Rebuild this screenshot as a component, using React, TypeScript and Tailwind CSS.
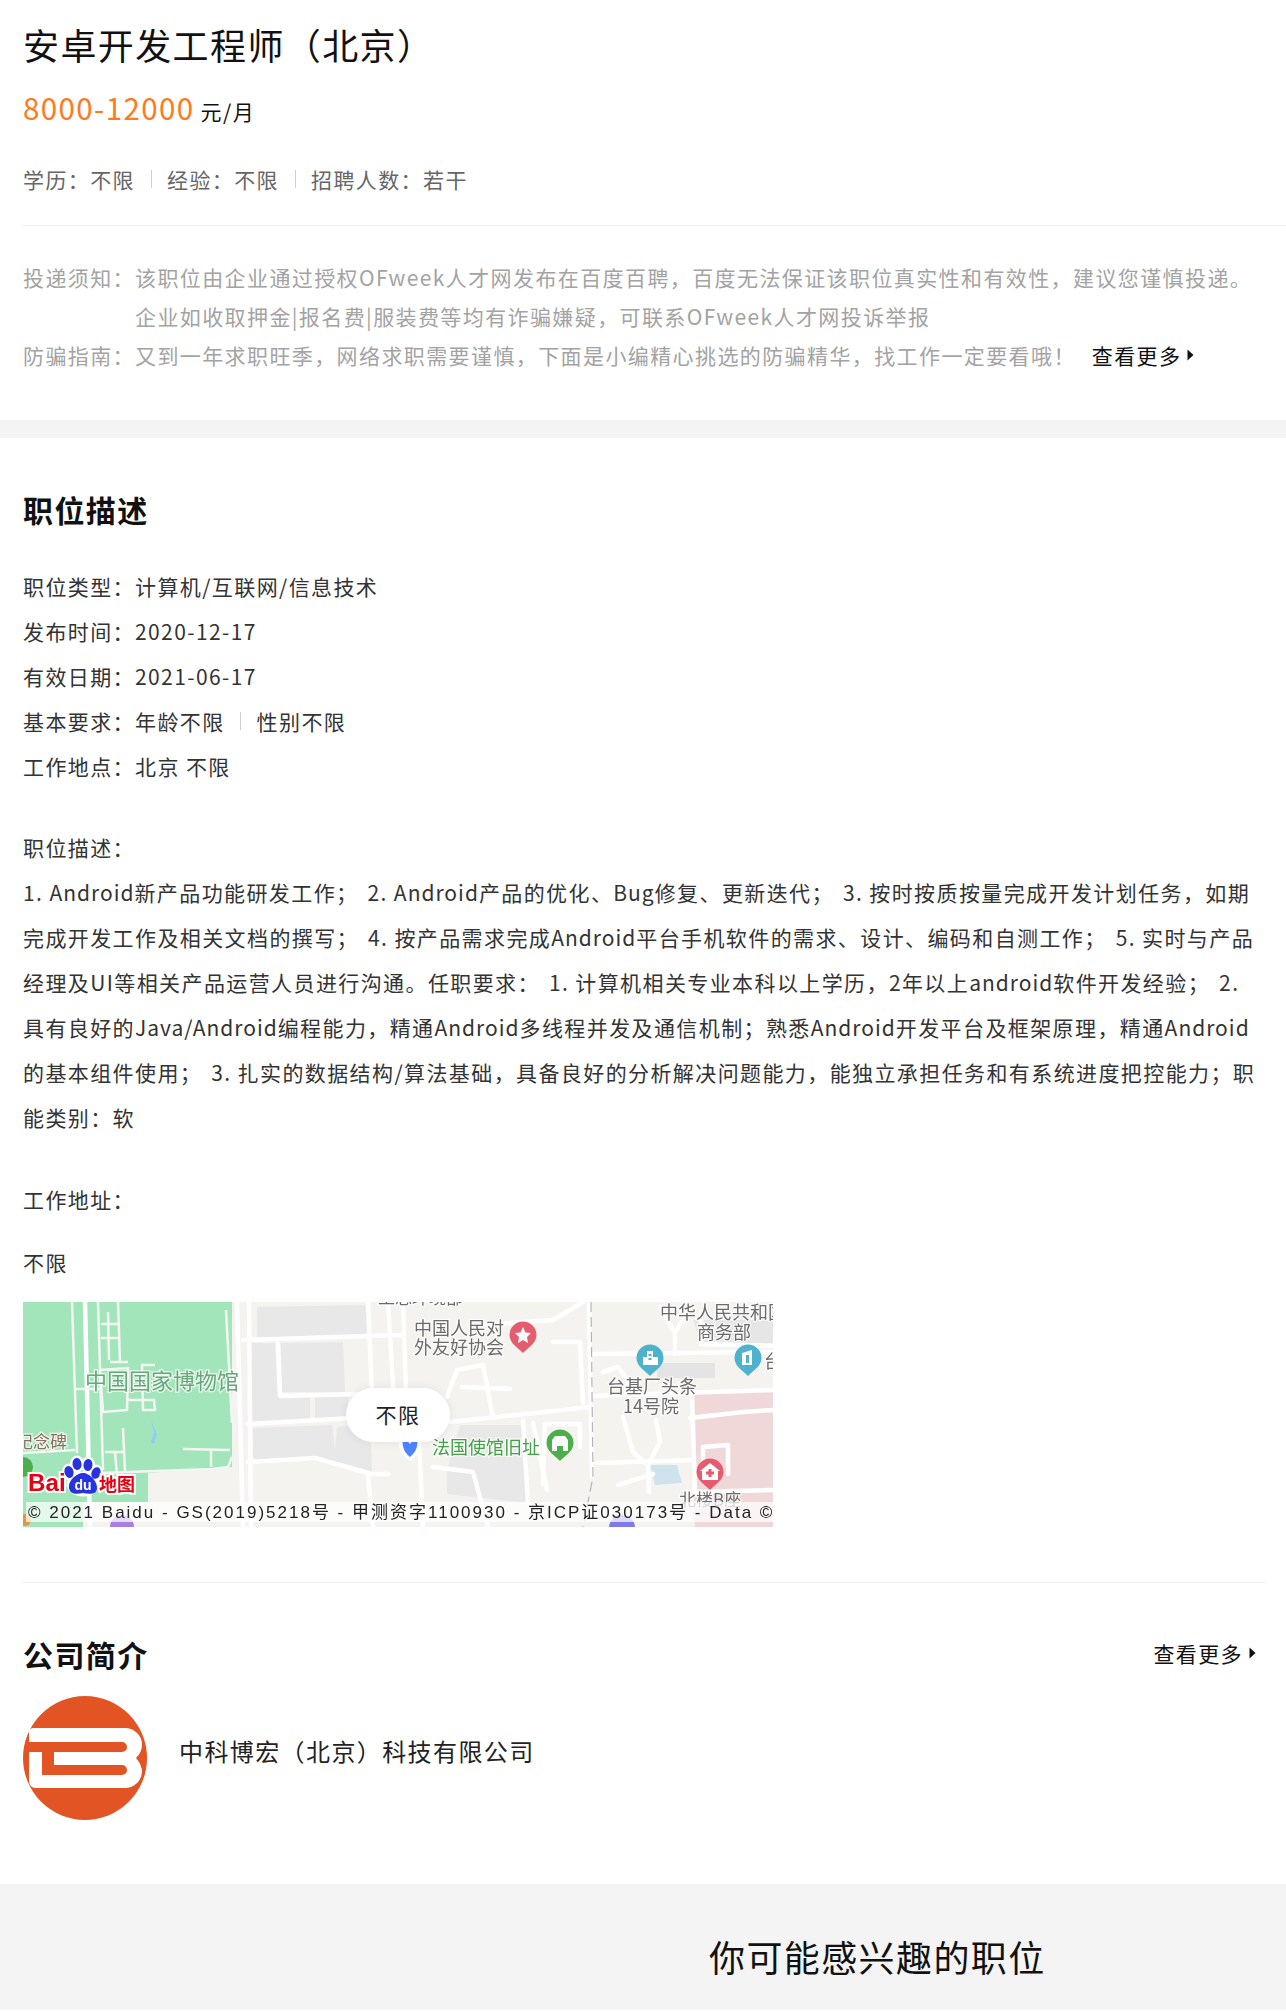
import React from "react";

const Sep = () => <span className="inline-block w-px h-[18px] bg-[#cfcfcf] mx-[15.5px] align-[0px]" />;

const Arrow = () => (
  <svg width="7" height="12" viewBox="0 0 7 12" className="ml-[6px] mb-[2px]">
    <path d="M0.5 0.5 L6.5 6 L0.5 11.5 Z" fill="#111" />
  </svg>
);

const L = ({ children }: { children: React.ReactNode }) => <span className="tracking-[1px]">{children}</span>;
const Gap = () => <span className="inline-block w-[9px]" />;

const Pin = ({ x, y, c, children }: { x: number; y: number; c: string; children?: React.ReactNode }) => (
  <g transform={`translate(${x} ${y})`}>
    <path d="M-13.5 0 A13.5 13.5 0 1 1 13.5 0 C13.5 8 6 12 0 18 C-6 12 -13.5 8 -13.5 0 Z" fill={c} />
    {children}
  </g>
);

const Label = ({ x, y, c = "#6b6b6b", s = 18, children }: { x: number; y: number; c?: string; s?: number; children: string }) => (
  <text x={x} y={y} fill={c} fontSize={s} letterSpacing={0} stroke="#fff" strokeWidth={2.5} strokeOpacity={0.75} paintOrder="stroke" fontFamily="'Noto Sans CJK SC',sans-serif">
    {children}
  </text>
);

const roadsThick = [
  "M62 0 L67 225", "M214 0 L220 225", "M226 0 L228 225", "M566 0 L569 175",
  "M220 38 L345 34 L380 33", "M225 122 L330 116", "M427 120 L567 105",
  "M570 52 L750 50", "M569 94 L750 88", "M574 161 L670 158", "M669 90 L672 190",
  "M500 118 L505 201", "M510 121 L524 188", "M424 95 L434 68 L460 63 L470 116",
  "M439 85 L487 87", "M530 40 L557 40 L560 101", "M460 22 L487 21 L530 18 L560 0",
  "M255 41 L257 94 L340 92", "M345 0 L350 116", "M365 0 L372 116", "M395 116 L400 225",
  "M380 0 L383 90", "M225 160 L292 156 L349 172 L365 172",
  "M345 175 L350 225", "M410 165 L450 170 L465 225", "M600 115 L610 150 L625 163 L637 140 L633 118",
  "M625 163 L626 190", "M595 183 L630 172", "M520 182 L522 122 L557 122 L557 145",
  "M667 116 L720 110 L750 108", "M680 165 L680 145 L705 143 L705 172", "M637 5 L652 31 L667 5",
  "M652 31 L652 52", "M678 10 L678 42 L750 44", "M574 205 L600 205", "M670 190 L750 188",
  "M580 70 L595 65 L605 78 L605 94",
];

const roadsThin = [
  "M49 0 L54 151", "M0 151 L52 148", "M52 87 L77 87", "M75 0 L80 168", "M95 0 L97 60",
  "M78 22 L96 22", "M78 36 L96 36", "M85 10 L86 58", "M77 68 L105 66 L104 108 L80 110 L77 68",
  "M87 60 L105 60", "M105 98 L131 98 L132 108 L120 108 L119 63 L132 63",
  "M100 126 L102 170", "M82 150 L102 150", "M92 150 L94 172", "M160 147 L207 148",
  "M188 149 L188 165", "M77 171 L190 167 L205 165 L209 155", "M203 8 L209 121",
];

const MapView = () => (
  <div className="relative w-[750px] h-[225px] mt-[17px] ml-[23px] overflow-hidden">
    <svg width="750" height="225" viewBox="0 0 750 225" className="block blur-[0.3px]">
      <rect width="750" height="225" fill="#f4f3f0" />
      <path d="M0 0 H209 V125 L209 165 L125 171 V200 H60 V225 H0 Z" fill="#a3e5bb" />
      <path d="M234 5 L342 3 L347 33 L234 36 Z" fill="#e8e8e8" />
      <path d="M225 41 L252 41 L255 95 L287 95 L287 120 L225 121 Z" fill="#e8e8e8" />
      <path d="M257 41 L320 40 L322 90 L259 90 Z" fill="#e8e8e8" />
      <path d="M292 95 L325 93 L325 118 L292 118 Z" fill="#e8e8e8" />
      <path d="M230 126 L309 123 L312 148 L314 125 L347 121 L349 171 L292 156 L237 161 L230 155 Z" fill="#e8e8e8" />
      <path d="M437 123 L499 123 L504 201 L424 192 L424 168 Z" fill="#e8e8e8" />
      <path d="M670 18 H750 V41 H678 Z" fill="#e6e6e6" />
      <path d="M634 61 L692 61 L692 76 L634 76 Z" fill="#e4e4e4" />
      <path d="M667 90 H750 V225 H672 Z" fill="#f0d8d8" />
      <path d="M627 163 L654 163 L659 181 L632 183 Z" fill="#cfe3ee" />
      <path d="M128 118 L131 130 L128 140 L131 142 L134 132 Z" fill="#8ecdf5" />
      {roadsThick.map((d, i) => (
        <path key={i} d={d} fill="none" stroke="#fff" strokeWidth={4.5} strokeLinejoin="round" strokeLinecap="round" />
      ))}
      {roadsThin.map((d, i) => (
        <path key={i} d={d} fill="none" stroke="#f3f6f3" strokeWidth={2.5} strokeLinejoin="round" />
      ))}
      <path d="M568 0 L570 175 L560 225" fill="none" stroke="#b5b5b5" strokeWidth={1.2} strokeDasharray="10 5" />

      <Label x={62} y={87} c="#69a67d" s={22}>中国国家博物馆</Label>
      <Label x={-7} y={146} c="#8d6e5d" s={17}>纪念碑</Label>
      <Label x={355} y={2} s={17}>工总环境部</Label>
      <Label x={391} y={32.5}>中国人民对</Label>
      <Label x={391} y={51.5}>外友好协会</Label>
      <Label x={637} y={17}>中华人民共和国</Label>
      <Label x={674} y={36.5}>商务部</Label>
      <Label x={584} y={90.5}>台基厂头条</Label>
      <Label x={600} y={110.5}>14号院</Label>
      <Label x={409} y={151.5} c="#43a047">法国使馆旧址</Label>
      <Label x={741} y={66}>台</Label>
      <Label x={656} y={204} s={17}>北楼B座</Label>

      <Pin x={500} y={33} c="#e55c6e">
        <path d="M0 -8 L2.5 -2.5 L8 -2 L4 2 L5 8 L0 5 L-5 8 L-4 2 L-8 -2 L-2.5 -2.5 Z" fill="#fff" />
      </Pin>
      <Pin x={627} y={56} c="#4eb2cc">
        <path d="M-7 7 V-1 H-3 V-7 H3 V-1 H8 V7 Z" fill="#fff" />
        <path d="M-1.5 -4 H1.5 V-2 H-1.5 Z M-1.5 0 H1.5 V2 H-1.5 Z" fill="#4eb2cc" />
      </Pin>
      <Pin x={725} y={56} c="#4eb2cc">
        <path d="M-6 7 V-5 L4 -8 V7 Z" fill="#fff" />
        <path d="M-2 -3 H1 V5 H-2 Z" fill="#4eb2cc" />
      </Pin>
      <Pin x={537} y={141} c="#4cae4c">
        <path d="M-8 8 V-3 L-5 -7 H5 L8 -3 V8 H3 V3 H-3 V8 Z" fill="#fff" />
      </Pin>
      <Pin x={687} y={170} c="#e55c6e">
        <path d="M0 -9 L10 -1 H8 V8 H-8 V-1 H-10 Z" fill="#fff" />
        <path d="M-1.5 -3 H1.5 V-0.5 H4 V2.5 H1.5 V5 H-1.5 V2.5 H-4 V-0.5 H-1.5 Z" fill="#e55c6e" />
      </Pin>
      <circle cx={99} cy={225} r={12} fill="#a97fe0" />
      <circle cx={599} cy={226} r={13} fill="#7d7bea" />
      <circle cx={0} cy={165} r={10} fill="#4cae4c" />
      <circle cx={2} cy={218} r={6} fill="#d89a45" />

      <path d="M376 130 H398 V142 C398 150 392 155 387 159 C382 155 376 150 376 142 Z" fill="#fff" />
      <path d="M380 134 L387 142 L394 134 C396 148 390 152 387 155 C384 152 378 148 380 134 Z" fill="#4f84ff" />

      <g fontFamily="'Liberation Sans',sans-serif" fontWeight={700}>
        <g stroke="#fff" strokeWidth={5} strokeLinejoin="round">
          <ellipse cx={54} cy={162} rx={4.5} ry={6} />
          <ellipse cx={65} cy={163} rx={4.5} ry={6} />
          <ellipse cx={46} cy={170} rx={4.5} ry={6} />
          <ellipse cx={73} cy={171} rx={4.5} ry={6} />
          <ellipse cx={60} cy={182} rx={14} ry={10} />
        </g>
        <text x={5} y={189} fontSize={24} letterSpacing={0.2} fill="#e60012" stroke="#fff" strokeWidth={4} paintOrder="stroke">Bai</text>
        <ellipse cx={54} cy={162} rx={4.5} ry={6} fill="#2932e1" transform="rotate(-8 54 162)" />
        <ellipse cx={65} cy={163} rx={4.5} ry={6} fill="#2932e1" transform="rotate(8 65 163)" />
        <ellipse cx={46} cy={170} rx={4.5} ry={6} fill="#2932e1" transform="rotate(-15 46 170)" />
        <ellipse cx={73} cy={171} rx={4.5} ry={6} fill="#2932e1" transform="rotate(20 73 171)" />
        <path d="M46 186 C45 178 54 171 60 171 C66 171 75 179 74 187 C73 193 66 192 60 191 C54 192 47 193 46 186 Z" fill="#2932e1" />
        <text x={60} y={188} fontSize={14} letterSpacing={0} fill="#fff" textAnchor="middle">du</text>
        <text x={76} y={189} fontSize={18} letterSpacing={0} fontWeight={700} fill="#e60012" stroke="#fff" strokeWidth={4} paintOrder="stroke" fontFamily="'Noto Sans CJK SC',sans-serif">地图</text>
      </g>

      <rect x={3} y={200} width={747} height={20} fill="#fff" opacity={0.72} />
      <text x={5} y={216} fontSize={17} fill="#222" letterSpacing={2} fontFamily="'Liberation Sans','Noto Sans CJK SC',sans-serif">
        © 2021 Baidu - GS(2019)5218号 - 甲测资字1100930 - 京ICP证030173号 - Data ©
      </text>
    </svg>
    <div className="absolute left-[323px] top-[86px] w-[104px] h-[54px] rounded-[27px] bg-white shadow-[0_0_10px_rgba(0,0,0,0.08)] flex items-center justify-center text-[21px] text-[#222]">
      不限
    </div>
  </div>
);

const CompanyLogo = () => (
  <svg width="124" height="124" viewBox="9 6 124 124" className="block shrink-0">
    <circle cx="71" cy="68" r="62" fill="#e25424" />
    <path
      d="M15 42 Q15 38 20 38 H112 A17 17 0 0 1 128 55 Q128 62 122 68 Q128 75 128 82 A17 17 0 0 1 112 98 H22 Q15 98 15 90 V62 H28 V85 H108 A5 5 0 0 0 108 75 H40 V62 H108 A5 5 0 0 0 108 52 H15 Z"
      fill="#fff"
    />
  </svg>
);

export default function App() {
  return (
    <div className="w-[1286px] h-[2011px] overflow-hidden bg-white font-['Noto_Sans_CJK_SC','Noto_Sans',sans-serif] text-[21px] tracking-[1.4px] text-[#333]">
      <div className="pl-[23px] pt-[19px]">
        <h1 className="text-[36px] leading-[50px] font-normal text-[#111]">安卓开发工程师（北京）</h1>
        <p className="mt-[18px] h-[40px] leading-[40px] text-[#111]">
          <span className="text-[29.5px] tracking-[1.4px] text-[#ff7a1a]">8000-12000</span>
          <span className="ml-[6px] text-[21px]">元/月</span>
        </p>
        <p className="mt-[32px] leading-[40px] text-[#666]">
          学历：不限<Sep />经验：不限<Sep />招聘人数：若干
        </p>
        <div className="mt-[26px] h-[1px] bg-[#eeeeee]" />
        <div className="pt-[32px] pb-[45px] text-[#a3a3a3] leading-[39px]">
          <div className="flex">
            <span className="w-[112px] shrink-0">投递须知：</span>
            <span>该职位由企业通过授权OFweek人才网发布在百度百聘，百度无法保证该职位真实性和有效性，建议您谨慎投递。</span>
          </div>
          <div className="flex">
            <span className="w-[112px] shrink-0" />
            <span>企业如收取押金|报名费|服装费等均有诈骗嫌疑，可联系OFweek人才网投诉举报</span>
          </div>
          <div className="flex">
            <span className="w-[112px] shrink-0">防骗指南：</span>
            <span>又到一年求职旺季，网络求职需要谨慎，下面是小编精心挑选的防骗精华，找工作一定要看哦！</span>
            <span className="ml-[16px] flex items-center text-[#111]">查看更多<Arrow /></span>
          </div>
        </div>
      </div>
      <div className="h-[18px] bg-[#f4f4f4]" />

      <div className="pl-[23px] pr-[21px]">
        <h2 className="mt-[51px] text-[30px] leading-[40px] font-bold text-[#111]">职位描述</h2>
        <div className="mt-[35px] leading-[45px]">
          <p>职位类型：计算机/互联网/信息技术</p>
          <p>发布时间：2020-12-17</p>
          <p>有效日期：2021-06-17</p>
          <p>基本要求：年龄不限<Sep />性别不限</p>
          <p>工作地点：北京 不限</p>
        </div>
        <div className="mt-[36px] leading-[45px] whitespace-nowrap">
          <p>职位描述：</p>
          <p>1. <L>Android</L>新产品功能研发工作；<Gap />2. <L>Android</L>产品的优化、<L>Bug</L>修复、更新迭代；<Gap />3. 按时按质按量完成开发计划任务，如期</p>
          <p>完成开发工作及相关文档的撰写；<Gap />4. 按产品需求完成<L>Android</L>平台手机软件的需求、设计、编码和自测工作；<Gap />5. 实时与产品</p>
          <p>经理及UI等相关产品运营人员进行沟通。任职要求：<Gap />1. 计算机相关专业本科以上学历，2年以上<L>android</L>软件开发经验；<Gap />2.</p>
          <p>具有良好的<L>Java/Android</L>编程能力，精通<L>Android</L>多线程并发及通信机制；熟悉<L>Android</L>开发平台及框架原理，精通<L>Android</L></p>
          <p>的基本组件使用；<Gap />3. 扎实的数据结构/算法基础，具备良好的分析解决问题能力，能独立承担任务和有系统进度把控能力；职</p>
          <p>能类别：软</p>
        </div>
        <p className="mt-[37px] leading-[45px]">工作地址：</p>
        <p className="mt-[18px] leading-[45px]">不限</p>
      </div>
      <MapView />

      <div className="pl-[23px] pr-[21px]">
        <div className="mt-[55px] h-[1px] bg-[#eeeeee]" />
        <div className="mt-[51px] flex items-center justify-between h-[40px]">
          <h2 className="text-[30px] leading-[40px] font-bold text-[#111]">公司简介</h2>
          <span className="flex items-center text-[#111] mr-[9px]">查看更多<Arrow /></span>
        </div>
        <div className="mt-[22px] flex items-start">
          <CompanyLogo />
          <span className="ml-[32px] mt-[39px] text-[24px] leading-[32px] text-[#222]">中科博宏（北京）科技有限公司</span>
        </div>
      </div>

      <div className="mt-[64px] h-[126px] bg-[#f4f4f4] pt-[47px] pl-[709px]">
        <h2 className="text-[36px] leading-[50px] font-normal text-[#111]">你可能感兴趣的职位</h2>
      </div>
    </div>
  );
}
